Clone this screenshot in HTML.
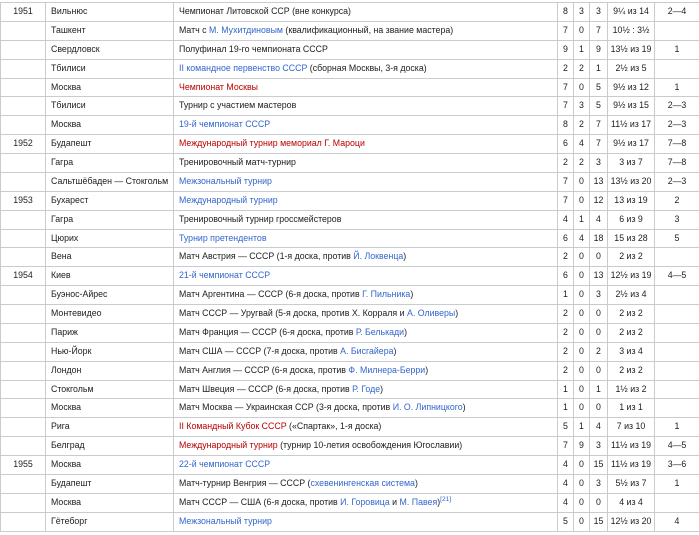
<!DOCTYPE html>
<html><head><meta charset="utf-8"><style>
body{margin:0;background:#fff;font-family:"Liberation Sans",Arial,sans-serif;font-size:8.8px;color:#202122;overflow:hidden;width:699px;height:533px}
table{border-collapse:collapse;table-layout:fixed;width:699px;margin-top:2px;margin-left:0}
td{border:1px solid #c8ccd1;padding:0 0 0 5px;line-height:17.88px;white-space:nowrap;overflow:hidden}
td.c{text-align:center;padding:0}
td.y{text-align:center;padding:0}
a{color:#3366cc;text-decoration:none}
a.r{color:#ba0000}
sup{font-size:6.5px;line-height:0}
</style></head><body>
<table>
<colgroup><col style="width:45px"><col style="width:128px"><col style="width:384px"><col style="width:16px"><col style="width:16px"><col style="width:18px"><col style="width:47px"><col style="width:45px"></colgroup>
<tr><td class="y">1951</td><td>Вильнюс</td><td>Чемпионат Литовской ССР (вне конкурса)</td><td class="c">8</td><td class="c">3</td><td class="c">3</td><td class="c">9¼ из 14</td><td class="c">2—4</td></tr>
<tr><td></td><td>Ташкент</td><td>Матч с <a>М. Мухитдиновым</a> (квалификационный, на звание мастера)</td><td class="c">7</td><td class="c">0</td><td class="c">7</td><td class="c">10½ : 3½</td><td class="c"></td></tr>
<tr><td></td><td>Свердловск</td><td>Полуфинал 19-го чемпионата СССР</td><td class="c">9</td><td class="c">1</td><td class="c">9</td><td class="c">13½ из 19</td><td class="c">1</td></tr>
<tr><td></td><td>Тбилиси</td><td><a>II командное первенство СССР</a> (сборная Москвы, 3-я доска)</td><td class="c">2</td><td class="c">2</td><td class="c">1</td><td class="c">2½ из 5</td><td class="c"></td></tr>
<tr><td></td><td>Москва</td><td><a class="r">Чемпионат Москвы</a></td><td class="c">7</td><td class="c">0</td><td class="c">5</td><td class="c">9½ из 12</td><td class="c">1</td></tr>
<tr><td></td><td>Тбилиси</td><td>Турнир с участием мастеров</td><td class="c">7</td><td class="c">3</td><td class="c">5</td><td class="c">9½ из 15</td><td class="c">2—3</td></tr>
<tr><td></td><td>Москва</td><td><a>19-й чемпионат СССР</a></td><td class="c">8</td><td class="c">2</td><td class="c">7</td><td class="c">11½ из 17</td><td class="c">2—3</td></tr>
<tr><td class="y">1952</td><td>Будапешт</td><td><a class="r">Международный турнир мемориал Г. Мароци</a></td><td class="c">6</td><td class="c">4</td><td class="c">7</td><td class="c">9½ из 17</td><td class="c">7—8</td></tr>
<tr><td></td><td>Гагра</td><td>Тренировочный матч-турнир</td><td class="c">2</td><td class="c">2</td><td class="c">3</td><td class="c">3 из 7</td><td class="c">7—8</td></tr>
<tr><td></td><td>Сальтшёбаден — Стокгольм</td><td><a>Межзональный турнир</a></td><td class="c">7</td><td class="c">0</td><td class="c">13</td><td class="c">13½ из 20</td><td class="c">2—3</td></tr>
<tr><td class="y">1953</td><td>Бухарест</td><td><a>Международный турнир</a></td><td class="c">7</td><td class="c">0</td><td class="c">12</td><td class="c">13 из 19</td><td class="c">2</td></tr>
<tr><td></td><td>Гагра</td><td>Тренировочный турнир гроссмейстеров</td><td class="c">4</td><td class="c">1</td><td class="c">4</td><td class="c">6 из 9</td><td class="c">3</td></tr>
<tr><td></td><td>Цюрих</td><td><a>Турнир претендентов</a></td><td class="c">6</td><td class="c">4</td><td class="c">18</td><td class="c">15 из 28</td><td class="c">5</td></tr>
<tr><td></td><td>Вена</td><td>Матч Австрия — СССР (1-я доска, против <a>Й. Локвенца</a>)</td><td class="c">2</td><td class="c">0</td><td class="c">0</td><td class="c">2 из 2</td><td class="c"></td></tr>
<tr><td class="y">1954</td><td>Киев</td><td><a>21-й чемпионат СССР</a></td><td class="c">6</td><td class="c">0</td><td class="c">13</td><td class="c">12½ из 19</td><td class="c">4—5</td></tr>
<tr><td></td><td>Буэнос-Айрес</td><td>Матч Аргентина — СССР (6-я доска, против <a>Г. Пильника</a>)</td><td class="c">1</td><td class="c">0</td><td class="c">3</td><td class="c">2½ из 4</td><td class="c"></td></tr>
<tr><td></td><td>Монтевидео</td><td>Матч СССР — Уругвай (5-я доска, против Х. Корраля и <a>А. Оливеры</a>)</td><td class="c">2</td><td class="c">0</td><td class="c">0</td><td class="c">2 из 2</td><td class="c"></td></tr>
<tr><td></td><td>Париж</td><td>Матч Франция — СССР (6-я доска, против <a>Р. Белькади</a>)</td><td class="c">2</td><td class="c">0</td><td class="c">0</td><td class="c">2 из 2</td><td class="c"></td></tr>
<tr><td></td><td>Нью-Йорк</td><td>Матч США — СССР (7-я доска, против <a>А. Бисгайера</a>)</td><td class="c">2</td><td class="c">0</td><td class="c">2</td><td class="c">3 из 4</td><td class="c"></td></tr>
<tr><td></td><td>Лондон</td><td>Матч Англия — СССР (6-я доска, против <a>Ф. Милнера-Берри</a>)</td><td class="c">2</td><td class="c">0</td><td class="c">0</td><td class="c">2 из 2</td><td class="c"></td></tr>
<tr><td></td><td>Стокгольм</td><td>Матч Швеция — СССР (6-я доска, против <a>Р. Годе</a>)</td><td class="c">1</td><td class="c">0</td><td class="c">1</td><td class="c">1½ из 2</td><td class="c"></td></tr>
<tr><td></td><td>Москва</td><td>Матч Москва — Украинская ССР (3-я доска, против <a>И. О. Липницкого</a>)</td><td class="c">1</td><td class="c">0</td><td class="c">0</td><td class="c">1 из 1</td><td class="c"></td></tr>
<tr><td></td><td>Рига</td><td><a class="r">II Командный Кубок СССР</a> («Спартак», 1-я доска)</td><td class="c">5</td><td class="c">1</td><td class="c">4</td><td class="c">7 из 10</td><td class="c">1</td></tr>
<tr><td></td><td>Белград</td><td><a class="r">Международный турнир</a> (турнир 10-летия освобождения Югославии)</td><td class="c">7</td><td class="c">9</td><td class="c">3</td><td class="c">11½ из 19</td><td class="c">4—5</td></tr>
<tr><td class="y">1955</td><td>Москва</td><td><a>22-й чемпионат СССР</a></td><td class="c">4</td><td class="c">0</td><td class="c">15</td><td class="c">11½ из 19</td><td class="c">3—6</td></tr>
<tr><td></td><td>Будапешт</td><td>Матч-турнир Венгрия — СССР (<a>схевенингенская система</a>)</td><td class="c">4</td><td class="c">0</td><td class="c">3</td><td class="c">5½ из 7</td><td class="c">1</td></tr>
<tr><td></td><td>Москва</td><td>Матч СССР — США (6-я доска, против <a>И. Горовица</a> и <a>М. Павея</a>)<sup><a>[21]</a></sup></td><td class="c">4</td><td class="c">0</td><td class="c">0</td><td class="c">4 из 4</td><td class="c"></td></tr>
<tr><td></td><td>Гётеборг</td><td><a>Межзональный турнир</a></td><td class="c">5</td><td class="c">0</td><td class="c">15</td><td class="c">12½ из 20</td><td class="c">4</td></tr>
</table>
</body></html>
